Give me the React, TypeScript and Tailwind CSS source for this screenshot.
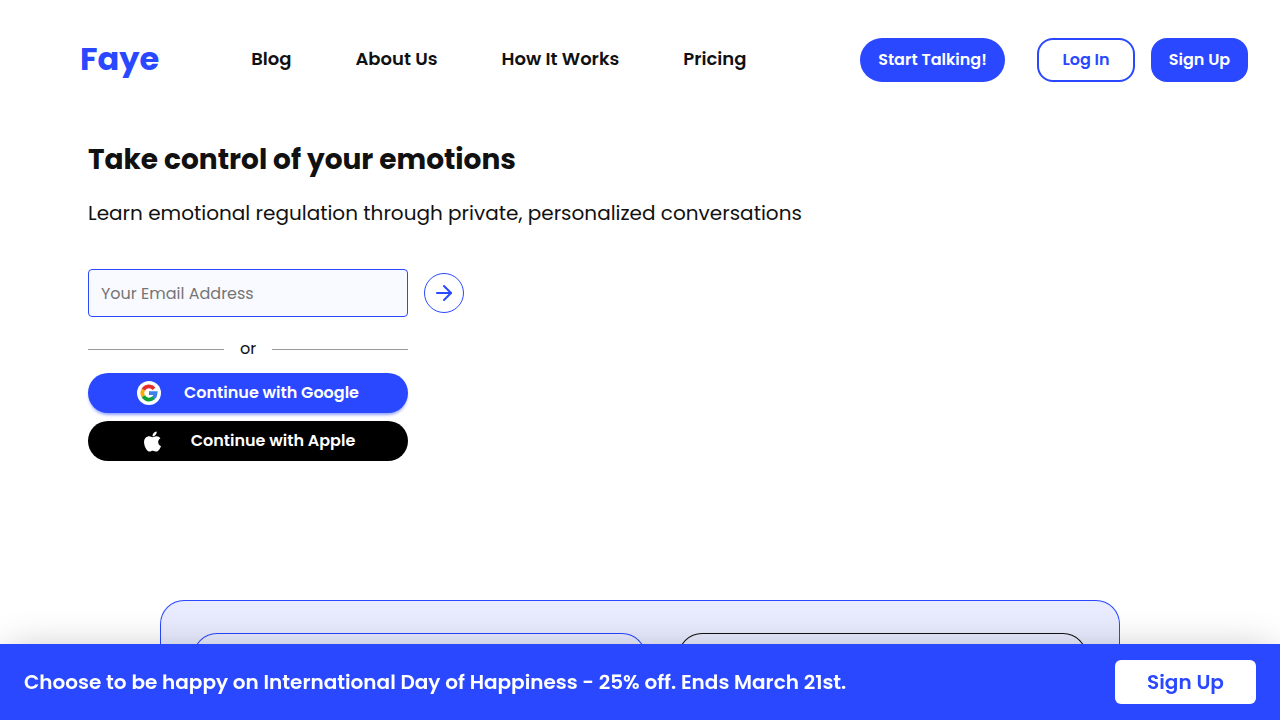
import React from 'react';
import { ArrowRight } from 'lucide-react';
import { FaApple } from 'react-icons/fa';

const navLinks = [
  { label: 'Blog', href: '#blog' },
  { label: 'About Us', href: '#about' },
  { label: 'How It Works', href: '#how-it-works' },
  { label: 'Pricing', href: '#pricing' },
];

function GoogleLogo() {
  return (
    <span className="w-6 h-6 rounded-full bg-white flex items-center justify-center shrink-0">
      <svg width="18" height="18" viewBox="0 0 48 48" aria-hidden="true">
        <g fill="none" strokeWidth="10">
          <path stroke="#e52d2c" d="M8.8 15.2A17.6 17.6 0 0 1 37.4 12.6" />
          <path stroke="#fbab04" d="M8.8 32.8A17.6 17.6 0 0 1 8.8 15.2" />
          <path stroke="#109f3a" d="M36.5 36.5A17.6 17.6 0 0 1 8.8 32.8" />
          <path stroke="#3f7fe8" d="M24 24.5H41.6A17.6 17.6 0 0 1 35.6 37.2" />
        </g>
      </svg>
    </span>
  );
}

function Header() {
  return (
    <header className="flex items-center h-[120px] pl-20 pr-8 font-semibold">
      <a href="#home" className="pb-0.5 text-[32px] leading-10 font-bold text-[#2948ff]">Faye</a>
      <nav className="flex items-center gap-16 ml-[92px] pb-0.5 text-[18px] leading-6">
        {navLinks.map((link) => (
          <a key={link.label} href={link.href} className="whitespace-nowrap">
            {link.label}
          </a>
        ))}
      </nav>
      <div className="flex items-center ml-auto text-base whitespace-nowrap">
        <button className="w-[145px] h-11 mr-8 rounded-full bg-[#2948ff] text-white">Start Talking!</button>
        <button className="w-[98px] h-11 mr-4 rounded-2xl border-2 border-[#2948ff] text-[#2948ff]">Log In</button>
        <button className="w-[97px] h-11 rounded-2xl bg-[#2948ff] text-white">Sign Up</button>
      </div>
    </header>
  );
}

function SignUpForm() {
  return (
    <form className="mt-10" onSubmit={(e) => e.preventDefault()}>
      <div className="flex items-center gap-4">
        <input
          type="email"
          aria-label="Your Email Address"
          placeholder="Your Email Address"
          className="w-80 h-12 px-3 rounded border border-[#2948ff] bg-[#f9faff] text-base placeholder:text-[#757575] outline-none"
        />
        <button
          type="submit"
          aria-label="Continue"
          className="w-10 h-10 rounded-full border border-[#2948ff] text-[#2948ff] flex items-center justify-center"
        >
          <ArrowRight size={24} />
        </button>
      </div>

      <div className="w-80">
        <div className="flex items-center gap-4 mt-5 mb-3 text-base leading-6">
          <span className="flex-1 border-t border-[#999999]" />
          <span>or</span>
          <span className="flex-1 border-t border-[#999999]" />
        </div>
        <button
          type="button"
          className="w-full h-10 mb-2 rounded-full bg-[#2948ff] text-white font-semibold flex items-center justify-center gap-[23px] shadow-[0_3px_3px_-1px_rgba(41,72,255,0.5)]"
        >
          <GoogleLogo />
          Continue with Google
        </button>
        <button
          type="button"
          className="w-full h-10 rounded-full bg-black text-white font-semibold flex items-center justify-center gap-[27px]"
        >
          <FaApple size={23} />
          Continue with Apple
        </button>
      </div>
    </form>
  );
}

function PromoBanner() {
  return (
    <div className="fixed inset-x-0 bottom-0 flex items-center justify-between px-6 py-4 bg-[#2948ff] text-white text-xl font-semibold shadow-[0_0_40px_-8px_rgba(0,0,0,0.28)]">
      <p>Choose to be happy on International Day of Happiness - 25% off. Ends March 21st.</p>
      <button className="w-[141px] h-11 rounded-md bg-white text-[#2948ff]">Sign Up</button>
    </div>
  );
}

export default function App() {
  return (
    <div className="min-h-screen bg-white text-[#111111] font-[Poppins,Inter,sans-serif]">
      <Header />
      <main>
        <section className="px-[88px] pt-5">
          <h1 className="text-[28px] leading-10 font-bold">Take control of your emotions</h1>
          <p className="mt-[17px] text-xl leading-8">
            Learn emotional regulation through private, personalized conversations
          </p>
          <SignUpForm />
        </section>

        <section className="max-w-[960px] mx-auto mt-[139px] p-8 grid grid-cols-[453fr_409fr] gap-8 rounded-t-3xl border border-b-0 border-[#2948ff] bg-[#e9ecff]">
          <div className="h-14 rounded-t-3xl border border-b-0 border-[#2948ff]" />
          <div className="h-14 rounded-t-3xl border border-b-0 border-[#111111]" />
        </section>
      </main>
      <PromoBanner />
    </div>
  );
}
